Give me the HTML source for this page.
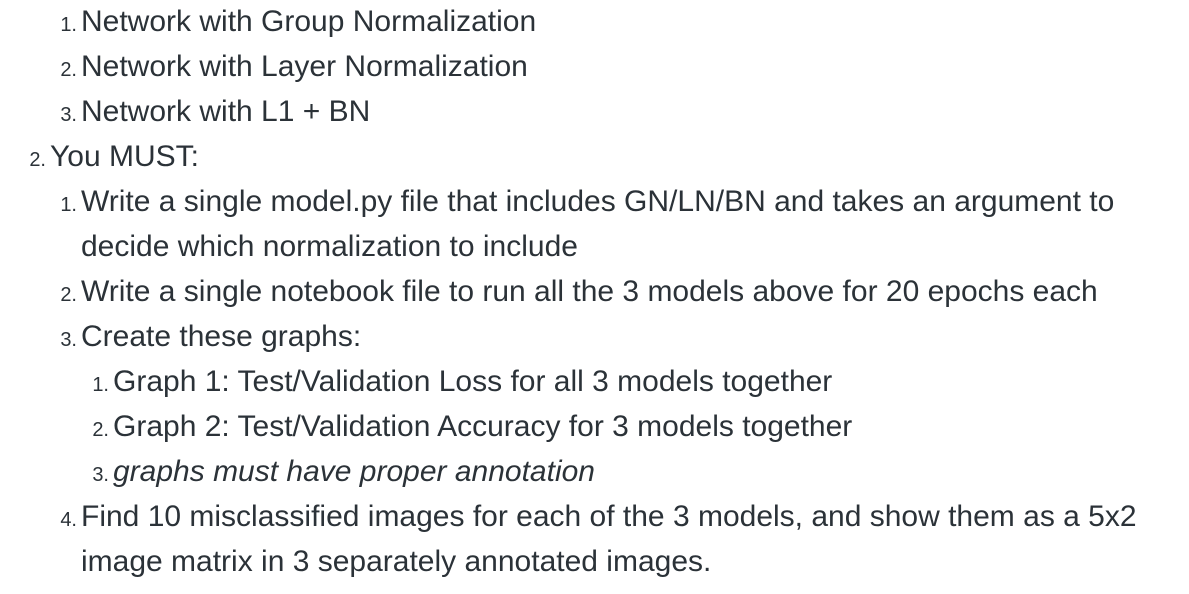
<!DOCTYPE html>
<html><head><style>
body{margin:0;width:1189px;height:594px;background:#fff;overflow:hidden;font-family:"Liberation Sans",Arial,sans-serif;color:#2b3238;}
.l{position:absolute;height:45px;line-height:45px;font-size:30px;white-space:nowrap;}
.n{display:inline-block;font-size:20px;text-align:right;width:40px;margin-right:4px;}
</style></head><body>
<div class="l" style="top:-1px;left:37px"><span class="n">1.</span>Network with Group Normalization</div>
<div class="l" style="top:44px;left:37px"><span class="n">2.</span>Network with Layer Normalization</div>
<div class="l" style="top:89px;left:37px"><span class="n">3.</span>Network with L1 + BN</div>
<div class="l" style="top:134px;left:6px"><span class="n">2.</span>You MUST:</div>
<div class="l" style="top:179px;left:37px"><span class="n">1.</span>Write a single model.py file that includes GN/LN/BN and takes an argument to</div>
<div class="l" style="top:224px;left:81px">decide which normalization to include</div>
<div class="l" style="top:269px;left:37px"><span class="n">2.</span>Write a single notebook file to run all the 3 models above for 20 epochs each</div>
<div class="l" style="top:314px;left:37px"><span class="n">3.</span>Create these graphs:</div>
<div class="l" style="top:359px;left:69px"><span class="n">1.</span>Graph 1: Test/Validation Loss for all 3 models together</div>
<div class="l" style="top:404px;left:69px"><span class="n">2.</span>Graph 2: Test/Validation Accuracy for 3 models together</div>
<div class="l" style="top:449px;left:69px"><span class="n">3.</span><i>graphs must have proper annotation</i></div>
<div class="l" style="top:494px;left:37px"><span class="n">4.</span>Find 10 misclassified images for each of the 3 models, and show them as a 5x2</div>
<div class="l" style="top:539px;left:81px">image matrix in 3 separately annotated images.</div>
</body></html>
